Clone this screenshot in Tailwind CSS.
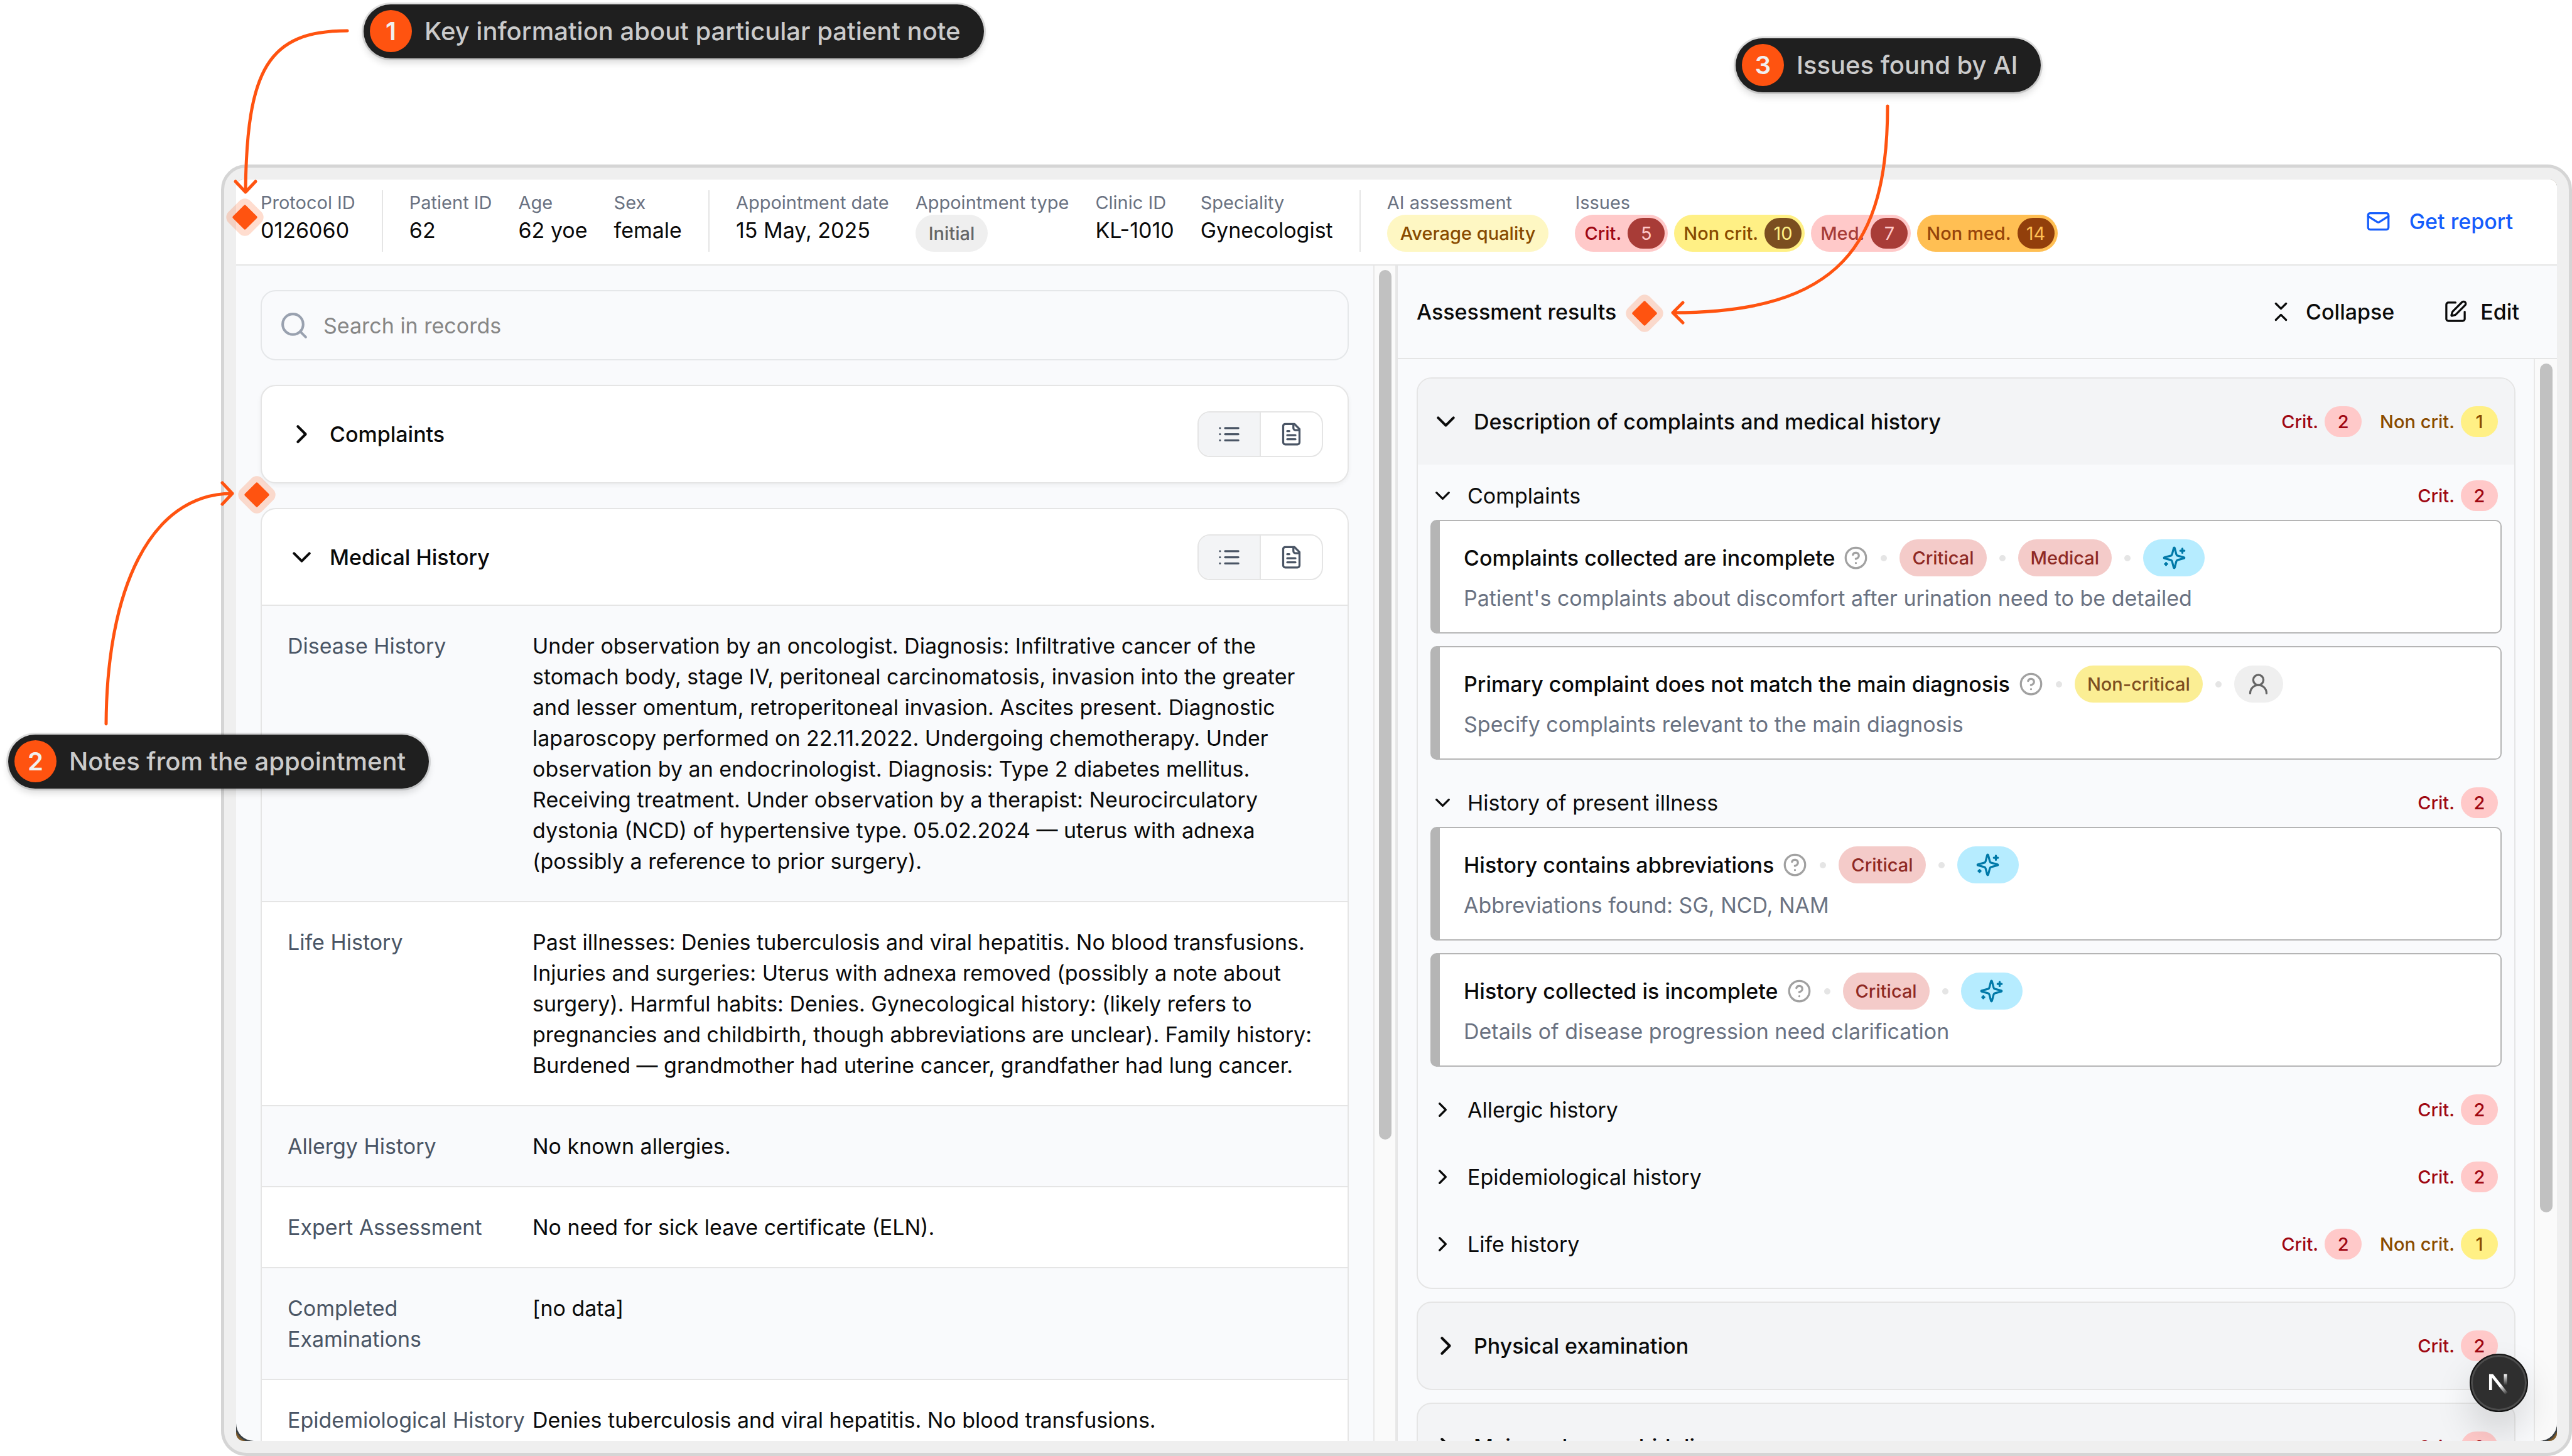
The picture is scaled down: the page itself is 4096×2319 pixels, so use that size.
<!DOCTYPE html>
<html lang="en">
<head>
<meta charset="utf-8">
<meta name="viewport" content="width=device-width, initial-scale=1">
<title>Patient note assessment</title>
<script src="https://cdn.jsdelivr.net/npm/@tailwindcss/browser@4"></script>
</head>
<body class="bg-white font-[Inter,sans-serif] text-[34px] leading-[49px] text-[#0a0a0a]">

<!-- Icon set -->
<svg class="hidden" aria-hidden="true">
  <symbol id="chevron-down" viewBox="0 0 24 24"><path d="m6 9 6 6 6-6"/></symbol>
  <symbol id="chevron-right" viewBox="0 0 24 24"><path d="m9 18 6-6-6-6"/></symbol>
  <symbol id="search" viewBox="0 0 24 24"><circle cx="11" cy="11" r="8"/><path d="m21 21-4.3-4.3"/></symbol>
  <symbol id="mail" viewBox="0 0 24 24"><rect width="20" height="16" x="2" y="4" rx="2"/><path d="m22 7-8.97 5.7a1.94 1.94 0 0 1-2.06 0L2 7"/></symbol>
  <symbol id="list" viewBox="0 0 24 24"><path d="M3 12h.01M3 18h.01M3 6h.01M8 12h13M8 18h13M8 6h13"/></symbol>
  <symbol id="file-text" viewBox="0 0 24 24"><path d="M15 2H6a2 2 0 0 0-2 2v16a2 2 0 0 0 2 2h12a2 2 0 0 0 2-2V7Z"/><path d="M14 2v4a2 2 0 0 0 2 2h4M10 9H8M16 13H8M16 17H8"/></symbol>
  <symbol id="collapse" viewBox="0 0 24 24"><path d="m7 20 5-5 5 5M7 4l5 5 5-5"/></symbol>
  <symbol id="edit" viewBox="0 0 24 24"><path d="M12 3H5a2 2 0 0 0-2 2v14a2 2 0 0 0 2 2h14a2 2 0 0 0 2-2v-7"/><path d="M18.375 2.625a1 1 0 0 1 3 3l-9.013 9.014a2 2 0 0 1-.853.505l-2.873.84a.5.5 0 0 1-.62-.62l.84-2.873a2 2 0 0 1 .506-.852z"/></symbol>
  <symbol id="help" viewBox="0 0 24 24"><circle cx="12" cy="12" r="10"/><path d="M9.09 9a3 3 0 0 1 5.83 1c0 2-3 3-3 3M12 17h.01"/></symbol>
  <symbol id="sparkles" viewBox="0 0 24 24"><path d="M9.937 15.5A2 2 0 0 0 8.5 14.063l-6.135-1.582a.5.5 0 0 1 0-.962L8.5 9.936A2 2 0 0 0 9.937 8.5l1.582-6.135a.5.5 0 0 1 .963 0L14.063 8.5A2 2 0 0 0 15.5 9.937l6.135 1.581a.5.5 0 0 1 0 .964L15.5 14.063a2 2 0 0 0-1.437 1.437l-1.582 6.135a.5.5 0 0 1-.963 0z"/><path d="M20 3v4M22 5h-4M4 17v2M5 18H3"/></symbol>
  <symbol id="user" viewBox="0 0 24 24"><circle cx="12" cy="8" r="5"/><path d="M20 21a8 8 0 0 0-16 0"/></symbol>
  <symbol id="marker" viewBox="0 0 60 60"><g transform="rotate(45 30 30)" stroke="none" fill="#ff5310"><rect x="5.500" y="5.500" width="49" height="49" rx="12" fill-opacity=".2"/><rect x="15.500" y="15.500" width="29" height="29" rx="2"/></g></symbol>
</svg>

<div class="relative flex h-screen w-full overflow-hidden pt-[262px] pl-[352px]">

  <!-- Application window -->
  <div class="flex min-w-0 flex-1 rounded-[40px] border-5 border-[#d5d5d5] bg-[#efefef] p-[19px]">
    <div class="flex min-w-0 flex-1 overflow-hidden rounded-xl bg-[#7d5a2a]">
      <main class="relative flex min-w-0 flex-1 flex-col overflow-hidden rounded-b-[28px] bg-[#f9fafc] ring-3 ring-[#3a4044]">

        <header class="flex shrink-0 items-center justify-between border-b-2 border-[#e5e5e5] bg-white pt-[17px] pr-[70px] pb-5 pl-[39px]">
          <div class="flex gap-[42px] whitespace-nowrap">
            <div><p class="text-[29px] leading-[39px] text-[#6a7282]">Protocol ID</p><p>0126060</p></div>
            <div class="w-0.5 bg-[#e5e5e5]"></div>
            <div><p class="text-[29px] leading-[39px] text-[#6a7282]">Patient ID</p><p>62</p></div>
            <div><p class="text-[29px] leading-[39px] text-[#6a7282]">Age</p><p>62 yoe</p></div>
            <div><p class="text-[29px] leading-[39px] text-[#6a7282]">Sex</p><p>female</p></div>
            <div class="w-0.5 bg-[#e5e5e5]"></div>
            <div><p class="text-[29px] leading-[39px] text-[#6a7282]">Appointment date</p><p>15 May, 2025</p></div>
            <div><p class="text-[29px] leading-[39px] text-[#6a7282]">Appointment type</p>
              <p class="flex h-[59px] w-fit items-center rounded-full bg-[#efefef] px-[21px] text-[29px] font-medium text-[#666]">Initial</p></div>
            <div><p class="text-[29px] leading-[39px] text-[#6a7282]">Clinic ID</p><p>KL-1010</p></div>
            <div><p class="text-[29px] leading-[39px] text-[#6a7282]">Speciality</p><p>Gynecologist</p></div>
            <div class="w-0.5 bg-[#e5e5e5]"></div>
            <div><p class="text-[29px] leading-[39px] text-[#6a7282]">AI assessment</p>
              <p class="flex h-[59px] w-fit items-center rounded-full bg-[#fef7c3] px-[21px] text-[29px] font-medium text-[#894b00]">Average quality</p></div>
            <div><p class="text-[29px] leading-[39px] text-[#6a7282]">Issues</p>
              <ul class="flex gap-[10px] text-[29px] font-medium">
                <li class="flex h-[59px] items-center gap-[10px] rounded-full bg-[#ffc9c9] pr-[5px] pl-[15px] text-[#9f0712]">Crit.<span class="flex h-[49px] w-[59px] items-center justify-center rounded-full bg-[#a83c37] font-normal text-[#ffc9c9]">5</span></li>
                <li class="flex h-[59px] items-center gap-[10px] rounded-full bg-[#fff085] pr-[5px] pl-[15px] text-[#894b00]">Non crit.<span class="flex h-[49px] w-[59px] items-center justify-center rounded-full bg-[#7b4e20] font-normal text-[#fff085]">10</span></li>
                <li class="flex h-[59px] items-center gap-[10px] rounded-full bg-[#ffc9c9] pr-[5px] pl-[15px] text-[#a83c37]">Med.<span class="flex h-[49px] w-[59px] items-center justify-center rounded-full bg-[#a83c37] font-normal text-[#ffc9c9]">7</span></li>
                <li class="flex h-[59px] items-center gap-[10px] rounded-full bg-[#ffbf53] pr-[5px] pl-[15px] text-[#96440b]">Non med.<span class="flex h-[49px] w-[59px] items-center justify-center rounded-full bg-[#923f0b] font-normal text-[#ffbf53]">14</span></li>
              </ul></div>
          </div>
          <button type="button" class="flex items-center gap-[30px] font-medium whitespace-nowrap text-[#155dfc]"><svg class="size-[39px] fill-none stroke-current stroke-2 [stroke-linecap:round] [stroke-linejoin:round]"><use href="#mail"/></svg>Get report</button>
        </header>

        <div class="flex min-h-0 flex-1">

          <!-- Records -->
          <section class="flex w-1/2 min-w-0">
            <div class="flex min-w-0 flex-1 flex-col gap-[39px] overflow-hidden px-[39px] pt-[39px]">
              <label class="flex h-[112px] shrink-0 items-center gap-[22px] rounded-3xl border-2 border-[#e5e7e9] px-[27px]">
                <svg class="size-[49px] fill-none stroke-[#99a1af] stroke-2 [stroke-linecap:round] [stroke-linejoin:round]"><use href="#search"/></svg>
                <input type="search" aria-label="Search in records" placeholder="Search in records" class="min-w-0 flex-1 bg-transparent outline-none placeholder:text-[#868686]">
              </label>

              <article class="shrink-0 rounded-3xl border-2 border-[#e5e5e5] bg-white shadow-[0_3px_7px_rgba(0,0,0,0.05)]">
                <div class="flex h-[153px] items-center justify-between px-[39px]">
                  <button type="button" class="flex items-center gap-5 font-medium"><svg class="size-[49px] fill-none stroke-current stroke-2 [stroke-linecap:round] [stroke-linejoin:round]"><use href="#chevron-right"/></svg>Complaints</button>
                  <div class="flex h-[73px] w-[200px] overflow-hidden rounded-[20px] border-2 border-[#e5e5e5] text-[#4a5565]">
                    <button type="button" aria-label="List view" class="flex flex-1 items-center justify-center bg-[#f3f4f6]"><svg class="size-[39px] fill-none stroke-current stroke-2 [stroke-linecap:round] [stroke-linejoin:round]"><use href="#list"/></svg></button>
                    <button type="button" aria-label="Document view" class="flex flex-1 items-center justify-center border-l-2 border-[#e5e5e5]"><svg class="size-[39px] fill-none stroke-current stroke-2 [stroke-linecap:round] [stroke-linejoin:round]"><use href="#file-text"/></svg></button>
                  </div>
                </div>
              </article>

              <article class="shrink-0 overflow-hidden rounded-t-3xl border-2 border-b-0 border-[#e5e5e5] bg-white">
                <div class="flex h-[154px] items-center justify-between border-b-2 border-[#e5e5e5] px-[39px]">
                  <button type="button" class="flex items-center gap-5 font-medium"><svg class="size-[49px] fill-none stroke-current stroke-2 [stroke-linecap:round] [stroke-linejoin:round]"><use href="#chevron-down"/></svg>Medical History</button>
                  <div class="flex h-[73px] w-[200px] overflow-hidden rounded-[20px] border-2 border-[#e5e5e5] text-[#4a5565]">
                    <button type="button" aria-label="List view" class="flex flex-1 items-center justify-center bg-[#f3f4f6]"><svg class="size-[39px] fill-none stroke-current stroke-2 [stroke-linecap:round] [stroke-linejoin:round]"><use href="#list"/></svg></button>
                    <button type="button" aria-label="Document view" class="flex flex-1 items-center justify-center border-l-2 border-[#e5e5e5]"><svg class="size-[39px] fill-none stroke-current stroke-2 [stroke-linecap:round] [stroke-linejoin:round]"><use href="#file-text"/></svg></button>
                  </div>
                </div>
                <dl>
                  <div class="flex border-b-2 border-[#e5e5e5] bg-[#f9fafc] py-[39px] pr-[39px] pl-[41px]">
                    <dt class="w-[390px] shrink-0 text-[#4a5565]">Disease History</dt>
                    <dd class="flex-1">Under observation by an oncologist. Diagnosis: Infiltrative cancer of the stomach body, stage IV, peritoneal carcinomatosis, invasion into the greater and lesser omentum, retroperitoneal invasion. Ascites present. Diagnostic laparoscopy performed on 22.11.2022. Undergoing chemotherapy. Under observation by an endocrinologist. Diagnosis: Type 2 diabetes mellitus. Receiving treatment. Under observation by a therapist: Neurocirculatory dystonia (NCD) of hypertensive type. 05.02.2024 — uterus with adnexa (possibly a reference to prior surgery).</dd>
                  </div>
                  <div class="flex border-b-2 border-[#e5e5e5] bg-white py-[39px] pr-[39px] pl-[41px]">
                    <dt class="w-[390px] shrink-0 text-[#4a5565]">Life History</dt>
                    <dd class="flex-1">Past illnesses: Denies tuberculosis and viral hepatitis. No blood transfusions. Injuries and surgeries: Uterus with adnexa removed (possibly a note about surgery). Harmful habits: Denies. Gynecological history: (likely refers to pregnancies and childbirth, though abbreviations are unclear). Family history: Burdened — grandmother had uterine cancer, grandfather had lung cancer.</dd>
                  </div>
                  <div class="flex border-b-2 border-[#e5e5e5] bg-[#f9fafc] py-[39px] pr-[39px] pl-[41px]">
                    <dt class="w-[390px] shrink-0 text-[#4a5565]">Allergy History</dt>
                    <dd class="flex-1">No known allergies.</dd>
                  </div>
                  <div class="flex border-b-2 border-[#e5e5e5] bg-white py-[39px] pr-[39px] pl-[41px]">
                    <dt class="w-[390px] shrink-0 text-[#4a5565]">Expert Assessment</dt>
                    <dd class="flex-1">No need for sick leave certificate (ELN).</dd>
                  </div>
                  <div class="flex border-b-2 border-[#e5e5e5] bg-[#f9fafc] py-[39px] pr-[39px] pl-[41px]">
                    <dt class="w-[390px] shrink-0 text-[#4a5565]">Completed Examinations</dt>
                    <dd class="flex-1">[no data]</dd>
                  </div>
                  <div class="flex bg-white py-[39px] pr-[39px] pl-[41px]">
                    <dt class="w-[390px] shrink-0 text-[#4a5565]">Epidemiological History</dt>
                    <dd class="flex-1">Denies tuberculosis and viral hepatitis. No blood transfusions.</dd>
                  </div>
                </dl>
              </article>
            </div>
            <div class="flex w-[37px] shrink-0 justify-center border-x-2 border-[#e8e8e8] bg-[#fafafa] pt-[7px]"><div class="h-[calc(74%+5px)] w-5 rounded-full bg-[#c1c1c1]"></div></div>
          </section>

          <!-- Assessment results -->
          <section class="flex w-1/2 min-w-0 flex-col border-l-2 border-[#e5e5e5]">
            <div class="flex h-[149px] shrink-0 items-center justify-between border-b-2 border-[#e5e5e5] pr-[60px] pl-[30px] font-medium">
              <h2>Assessment results</h2>
              <div class="flex gap-[78px]">
                <button type="button" class="flex items-center gap-5"><svg class="size-[39px] fill-none stroke-current stroke-2 [stroke-linecap:round] [stroke-linejoin:round]"><use href="#collapse"/></svg>Collapse</button>
                <button type="button" class="flex items-center gap-5"><svg class="size-[39px] fill-none stroke-current stroke-2 [stroke-linecap:round] [stroke-linejoin:round]"><use href="#edit"/></svg>Edit</button>
              </div>
            </div>

            <div class="flex min-h-0 flex-1">
              <div class="flex min-w-0 flex-1 flex-col gap-5 overflow-hidden pt-[29px] pr-[29px] pl-[30px]">

                <article class="shrink-0 overflow-hidden rounded-3xl border-2 border-[#e5e5e5]">
                  <div class="flex h-[137px] items-center justify-between bg-[#f3f4f6] pr-[26px] pl-5">
                    <button type="button" class="flex items-center gap-5 font-medium"><svg class="size-[49px] fill-none stroke-current stroke-2 [stroke-linecap:round] [stroke-linejoin:round]"><use href="#chevron-down"/></svg>Description of complaints and medical history</button>
                    <div class="flex gap-[29px] text-[29px] font-medium">
                      <p class="flex items-center gap-[10px] text-[#9f0712]">Crit.<span class="flex h-[49px] w-[59px] items-center justify-center rounded-full bg-[#ffc9c9]">2</span></p>
                      <p class="flex items-center gap-[10px] text-[#894b00]">Non crit.<span class="flex h-[49px] w-[59px] items-center justify-center rounded-full bg-[#fff085]">1</span></p>
                    </div>
                  </div>

                  <div class="flex flex-col gap-[29px] px-5 pt-[10px] pb-[31px]">
                    <section>
                      <div class="flex h-[78px] items-center justify-between pr-1.5">
                        <button type="button" class="flex items-center gap-5"><svg class="size-[39px] fill-none stroke-current stroke-2 [stroke-linecap:round] [stroke-linejoin:round]"><use href="#chevron-down"/></svg>Complaints</button>
                        <p class="flex items-center gap-[10px] text-[29px] font-medium text-[#9f0712]">Crit.<span class="flex h-[49px] w-[59px] items-center justify-center rounded-full bg-[#ffc9c9]">2</span></p>
                      </div>
                      <div class="flex flex-col gap-5">
                        <div class="flex h-[181px] flex-col gap-[10px] rounded-[10px] border-2 border-l-[15px] border-[#b5b5b5] bg-white pt-[29px] pl-[38px]">
                          <div class="flex items-center gap-5">
                            <h3 class="flex items-center gap-[14px] font-medium">Complaints collected are incomplete <svg class="size-[39px] fill-none stroke-[#a1a1a1] stroke-2 [stroke-linecap:round] [stroke-linejoin:round]"><use href="#help"/></svg></h3>
                            <span class="size-[10px] rounded-full bg-[#e5e5e5]"></span>
                            <span class="flex h-[59px] items-center rounded-full bg-[#f4cbc9] px-5 text-[29px] font-medium text-[#8f2a24]">Critical</span>
                            <span class="size-[10px] rounded-full bg-[#e5e5e5]"></span>
                            <span class="flex h-[59px] items-center rounded-full bg-[#f4cbc9] px-5 text-[29px] font-medium text-[#8f2a24]">Medical</span>
                            <span class="size-[10px] rounded-full bg-[#e5e5e5]"></span>
                            <span class="flex h-[59px] w-[98px] items-center justify-center rounded-full bg-[#b6ecff] text-[#0079a8]"><svg class="size-[39px] fill-none stroke-current stroke-2 [stroke-linecap:round] [stroke-linejoin:round]"><use href="#sparkles"/></svg></span>
                          </div>
                          <p class="text-[#6a7282]">Patient's complaints about discomfort after urination need to be detailed</p>
                        </div>
                        <div class="flex h-[181px] flex-col gap-[10px] rounded-[10px] border-2 border-l-[15px] border-[#b5b5b5] bg-white pt-[29px] pl-[38px]">
                          <div class="flex items-center gap-5">
                            <h3 class="flex items-center gap-[14px] font-medium">Primary complaint does not match the main diagnosis <svg class="size-[39px] fill-none stroke-[#a1a1a1] stroke-2 [stroke-linecap:round] [stroke-linejoin:round]"><use href="#help"/></svg></h3>
                            <span class="size-[10px] rounded-full bg-[#e5e5e5]"></span>
                            <span class="flex h-[59px] items-center rounded-full bg-[#fbee94] px-5 text-[29px] font-medium text-[#7d4e21]">Non-critical</span>
                            <span class="size-[10px] rounded-full bg-[#e5e5e5]"></span>
                            <span class="flex h-[59px] w-[78px] items-center justify-center rounded-full bg-[#efefef] text-[#666]"><svg class="size-[39px] fill-none stroke-current stroke-2 [stroke-linecap:round] [stroke-linejoin:round]"><use href="#user"/></svg></span>
                          </div>
                          <p class="text-[#6a7282]">Specify complaints relevant to the main diagnosis</p>
                        </div>
                      </div>
                    </section>

                    <section>
                      <div class="flex h-[78px] items-center justify-between pr-1.5">
                        <button type="button" class="flex items-center gap-5"><svg class="size-[39px] fill-none stroke-current stroke-2 [stroke-linecap:round] [stroke-linejoin:round]"><use href="#chevron-down"/></svg>History of present illness</button>
                        <p class="flex items-center gap-[10px] text-[29px] font-medium text-[#9f0712]">Crit.<span class="flex h-[49px] w-[59px] items-center justify-center rounded-full bg-[#ffc9c9]">2</span></p>
                      </div>
                      <div class="flex flex-col gap-5">
                        <div class="flex h-[181px] flex-col gap-[10px] rounded-[10px] border-2 border-l-[15px] border-[#b5b5b5] bg-white pt-[29px] pl-[38px]">
                          <div class="flex items-center gap-5">
                            <h3 class="flex items-center gap-[14px] font-medium">History contains abbreviations <svg class="size-[39px] fill-none stroke-[#a1a1a1] stroke-2 [stroke-linecap:round] [stroke-linejoin:round]"><use href="#help"/></svg></h3>
                            <span class="size-[10px] rounded-full bg-[#e5e5e5]"></span>
                            <span class="flex h-[59px] items-center rounded-full bg-[#f4cbc9] px-5 text-[29px] font-medium text-[#8f2a24]">Critical</span>
                            <span class="size-[10px] rounded-full bg-[#e5e5e5]"></span>
                            <span class="flex h-[59px] w-[98px] items-center justify-center rounded-full bg-[#b6ecff] text-[#0079a8]"><svg class="size-[39px] fill-none stroke-current stroke-2 [stroke-linecap:round] [stroke-linejoin:round]"><use href="#sparkles"/></svg></span>
                          </div>
                          <p class="text-[#6a7282]">Abbreviations found: SG, NCD, NAM</p>
                        </div>
                        <div class="flex h-[181px] flex-col gap-[10px] rounded-[10px] border-2 border-l-[15px] border-[#b5b5b5] bg-white pt-[29px] pl-[38px]">
                          <div class="flex items-center gap-5">
                            <h3 class="flex items-center gap-[14px] font-medium">History collected is incomplete <svg class="size-[39px] fill-none stroke-[#a1a1a1] stroke-2 [stroke-linecap:round] [stroke-linejoin:round]"><use href="#help"/></svg></h3>
                            <span class="size-[10px] rounded-full bg-[#e5e5e5]"></span>
                            <span class="flex h-[59px] items-center rounded-full bg-[#f4cbc9] px-5 text-[29px] font-medium text-[#8f2a24]">Critical</span>
                            <span class="size-[10px] rounded-full bg-[#e5e5e5]"></span>
                            <span class="flex h-[59px] w-[98px] items-center justify-center rounded-full bg-[#b6ecff] text-[#0079a8]"><svg class="size-[39px] fill-none stroke-current stroke-2 [stroke-linecap:round] [stroke-linejoin:round]"><use href="#sparkles"/></svg></span>
                          </div>
                          <p class="text-[#6a7282]">Details of disease progression need clarification</p>
                        </div>
                      </div>
                    </section>

                    <div class="flex h-[78px] items-center justify-between pr-1.5">
                      <button type="button" class="flex items-center gap-5"><svg class="size-[39px] fill-none stroke-current stroke-2 [stroke-linecap:round] [stroke-linejoin:round]"><use href="#chevron-right"/></svg>Allergic history</button>
                      <p class="flex items-center gap-[10px] text-[29px] font-medium text-[#9f0712]">Crit.<span class="flex h-[49px] w-[59px] items-center justify-center rounded-full bg-[#ffc9c9]">2</span></p>
                    </div>
                    <div class="flex h-[78px] items-center justify-between pr-1.5">
                      <button type="button" class="flex items-center gap-5"><svg class="size-[39px] fill-none stroke-current stroke-2 [stroke-linecap:round] [stroke-linejoin:round]"><use href="#chevron-right"/></svg>Epidemiological history</button>
                      <p class="flex items-center gap-[10px] text-[29px] font-medium text-[#9f0712]">Crit.<span class="flex h-[49px] w-[59px] items-center justify-center rounded-full bg-[#ffc9c9]">2</span></p>
                    </div>
                    <div class="flex h-[78px] items-center justify-between pr-1.5">
                      <button type="button" class="flex items-center gap-5"><svg class="size-[39px] fill-none stroke-current stroke-2 [stroke-linecap:round] [stroke-linejoin:round]"><use href="#chevron-right"/></svg>Life history</button>
                      <div class="flex gap-[29px] text-[29px] font-medium">
                        <p class="flex items-center gap-[10px] text-[#9f0712]">Crit.<span class="flex h-[49px] w-[59px] items-center justify-center rounded-full bg-[#ffc9c9]">2</span></p>
                        <p class="flex items-center gap-[10px] text-[#894b00]">Non crit.<span class="flex h-[49px] w-[59px] items-center justify-center rounded-full bg-[#fff085]">1</span></p>
                      </div>
                    </div>
                  </div>
                </article>

                <article class="shrink-0 rounded-3xl border-2 border-[#e5e5e5] bg-[#f3f4f6]">
                  <div class="flex h-[137px] items-center justify-between pr-[26px] pl-5">
                    <button type="button" class="flex items-center gap-5 font-medium"><svg class="size-[49px] fill-none stroke-current stroke-2 [stroke-linecap:round] [stroke-linejoin:round]"><use href="#chevron-right"/></svg>Physical examination</button>
                    <p class="flex items-center gap-[10px] text-[29px] font-medium text-[#9f0712]">Crit.<span class="flex h-[49px] w-[59px] items-center justify-center rounded-full bg-[#ffc9c9]">2</span></p>
                  </div>
                </article>

                <article class="shrink-0 rounded-3xl border-2 border-[#e5e5e5] bg-[#f3f4f6]">
                  <div class="flex h-[137px] items-center justify-between pr-[26px] pl-5">
                    <button type="button" class="flex items-center gap-5 font-medium"><svg class="size-[49px] fill-none stroke-current stroke-2 [stroke-linecap:round] [stroke-linejoin:round]"><use href="#chevron-right"/></svg>Main and comorbid disease</button>
                    <p class="flex items-center gap-[10px] text-[29px] font-medium text-[#9f0712]">Crit.<span class="flex h-[49px] w-[59px] items-center justify-center rounded-full bg-[#ffc9c9]">2</span></p>
                  </div>
                </article>
              </div>
              <div class="flex w-[37px] shrink-0 justify-center border-l-2 border-[#e8e8e8] bg-[#fafafa] pt-[7px]"><div class="h-[calc(79%-4px)] w-5 rounded-full bg-[#c1c1c1]"></div></div>
            </div>
          </section>
        </div>

        <!-- Developer tools badge -->
        <button type="button" aria-label="Open developer tools" class="absolute right-[46px] bottom-[46px] size-[93px] rounded-full border-2 border-[#141414] bg-[#2f2f2f] inset-ring-3 inset-ring-[#4c4c4c] shadow-[0_30px_60px_rgba(0,0,0,0.14)]">
          <svg viewBox="0 0 246 246" class="size-full" aria-hidden="true">
            <defs>
              <linearGradient id="fade-diagonal" gradientUnits="userSpaceOnUse" x1="130" y1="134" x2="160" y2="172"><stop stop-color="#fff"/><stop offset="1" stop-color="#fff" stop-opacity="0"/></linearGradient>
              <linearGradient id="fade-stem" gradientUnits="userSpaceOnUse" x1="151" y1="84" x2="151" y2="134"><stop stop-color="#fff"/><stop offset="1" stop-color="#fff" stop-opacity="0"/></linearGradient>
            </defs>
            <path d="M80 84h17l65 82-11 8-58-74v55H80Z" fill="url(#fade-diagonal)"/>
            <path d="M145 84h14v52h-14Z" fill="url(#fade-stem)"/>
          </svg>
        </button>
      </main>
    </div>
  </div>

  <!-- Callout arrows -->
  <svg class="pointer-events-none absolute top-0 left-0 h-[1200px] w-[3100px] fill-none stroke-[#ff5310] stroke-5 [stroke-linecap:round] [stroke-linejoin:round]" viewBox="0 0 3100 1200" aria-hidden="true">
    <path d="M553 49C427 49 393 110 391 305M375 289l16 17 16-17"/>
    <path d="M169 1153C170 940 238 787 369 786M354 769l16 17-16 17"/>
    <path d="M3006 169C3006 390 2930 498 2665 498M2680 482l-16 16 16 16"/>
  </svg>
  <svg class="pointer-events-none absolute top-[316px] left-[360px] size-[60px]" aria-hidden="true"><use href="#marker"/></svg>
  <svg class="pointer-events-none absolute top-[758px] left-[379px] size-[60px]" aria-hidden="true"><use href="#marker"/></svg>
  <svg class="pointer-events-none absolute top-[469px] left-[2589px] size-[60px]" aria-hidden="true"><use href="#marker"/></svg>

  <!-- Callouts -->
  <p class="absolute top-[7px] left-[579px] flex h-[86px] items-center gap-5 rounded-full bg-[#1f1f1f] pr-[37px] pb-0.5 pl-[10px] text-[40px] font-medium whitespace-nowrap text-[#cbcbcb] shadow-[0_7px_12px_rgba(0,0,0,0.14)] ring-3 ring-black/12"><span class="flex size-[67px] items-center justify-center rounded-full bg-[#ff5310] font-semibold text-[#f0f0f0]">1</span>Key information about particular patient note</p>
  <p class="absolute top-[1170px] left-[13px] flex h-[86px] items-center gap-5 rounded-full bg-[#1f1f1f] pr-[37px] pb-0.5 pl-[10px] text-[40px] font-medium whitespace-nowrap text-[#cbcbcb] shadow-[0_7px_12px_rgba(0,0,0,0.14)] ring-3 ring-black/12"><span class="flex size-[67px] items-center justify-center rounded-full bg-[#ff5310] font-semibold text-[#f0f0f0]">2</span>Notes from the appointment</p>
  <p class="absolute top-[61px] left-[2764px] flex h-[86px] items-center gap-5 rounded-full bg-[#1f1f1f] pr-[37px] pb-0.5 pl-[10px] text-[40px] font-medium whitespace-nowrap text-[#cbcbcb] shadow-[0_7px_12px_rgba(0,0,0,0.14)] ring-3 ring-black/12"><span class="flex size-[67px] items-center justify-center rounded-full bg-[#ff5310] font-semibold text-[#f0f0f0]">3</span>Issues found by AI</p>
</div>
</body>
</html>
